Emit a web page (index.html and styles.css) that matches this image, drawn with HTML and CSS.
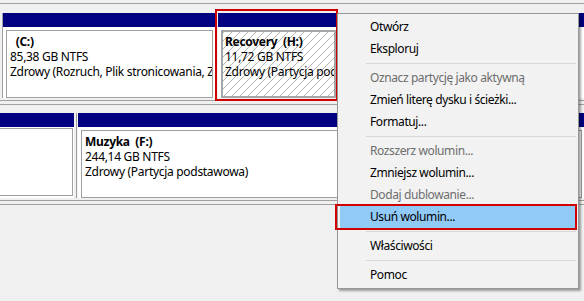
FILE: index.html
```html
<!DOCTYPE html>
<html lang="pl">
<head>
    <meta charset="UTF-8">
    <title>Zarządzanie dyskami</title>
    <link rel="stylesheet" href="styles.css">
</head>
<body>
    <div class="volumes">
        <div class="edge"></div>

        <div class="disk">
            <div class="disk-head"></div>
            <div class="part part-c">
                <div class="part-bar"></div>
                <div class="part-body">
                    <div class="part-box">
                        <div class="part-name">&nbsp;&nbsp;(C:)</div>
                        <div>85,38 GB NTFS</div>
                        <div>Zdrowy (Rozruch, Plik stronicowania, Zrzut awaryjny, Partycja podstawowa)</div>
                    </div>
                </div>
            </div>
            <div class="part-gap"></div>
            <div class="part part-h">
                <div class="part-bar"></div>
                <div class="part-body">
                    <div class="part-box hatched">
                        <div class="part-name">Recovery&nbsp;&nbsp;(H:)</div>
                        <div>11,72 GB NTFS</div>
                        <div>Zdrowy (Partycja podstawowa)</div>
                    </div>
                </div>
            </div>
            <div class="part-gap"></div>
            <div class="part part-rest">
                <div class="part-bar"></div>
                <div class="part-body"></div>
            </div>
        </div>

        <div class="disk-sep"></div>

        <div class="disk">
            <div class="part part-a">
                <div class="part-bar"></div>
                <div class="part-body">
                    <div class="part-box"></div>
                </div>
            </div>
            <div class="part-gap split"></div>
            <div class="part part-f">
                <div class="part-bar"></div>
                <div class="part-body">
                    <div class="part-box">
                        <div class="part-name">Muzyka&nbsp;&nbsp;(F:)</div>
                        <div>244,14 GB NTFS</div>
                        <div>Zdrowy (Partycja podstawowa)</div>
                    </div>
                </div>
            </div>
        </div>

        <div class="disk-sep"></div>
    </div>

    <div class="marker marker-part"></div>

    <ul class="menu">
        <li class="item">Otwórz</li>
        <li class="item">Eksploruj</li>
        <li class="sep"></li>
        <li class="item disabled">Oznacz partycję jako aktywną</li>
        <li class="item">Zmień literę dysku i ścieżki...</li>
        <li class="item">Formatuj...</li>
        <li class="sep"></li>
        <li class="item disabled">Rozszerz wolumin...</li>
        <li class="item">Zmniejsz wolumin...</li>
        <li class="item disabled">Dodaj dublowanie...</li>
        <li class="item active">Usuń wolumin...</li>
        <li class="sep"></li>
        <li class="item">Właściwości</li>
        <li class="sep"></li>
        <li class="item">Pomoc</li>
    </ul>

    <div class="marker marker-item"></div>
</body>
</html>
```

FILE: styles.css
```css
* {
    box-sizing: border-box;
}
body {
    margin: 0;
    background-color: #f0f0f0;
    font-family: "Noto Sans", "Open Sans", sans-serif;
    font-size: 12px;
    letter-spacing: -0.3px;
    color: #000;
    overflow: hidden;
}
.volumes {
    width: 584px;
}
.edge {
    height: 4px;
    border-bottom: 1px solid #a0a0a0;
    margin-bottom: 9px;
}
.disk {
    display: flex;
    height: 85px;
}
.disk-head {
    width: 3px;
    border-right: 1px solid #a0a0a0;
}
.part {
    display: flex;
    flex-direction: column;
    flex-shrink: 0;
}
.part-bar {
    height: 14px;
    background-color: #000080;
}
.part-body {
    flex: 1;
    background-color: #fff;
    padding: 3px 2px 0 3px;
}
.part-box {
    height: 68px;
    border: 1px solid #a0a0a0;
    padding: 3px 3px 0 3px;
    line-height: 15px;
    white-space: nowrap;
    overflow: hidden;
}
.part-name {
    font-weight: bold;
}
.hatched {
    border: 2px solid #a6a6a6;
    padding: 2px 2px 0 2px;
    background-color: #fff;
    background-image: repeating-linear-gradient(135deg, #b4b4b4 0, #b4b4b4 1px, transparent 1px, transparent 5.66px);
}
.part-gap {
    width: 3px;
    flex-shrink: 0;
}
.part-gap.split {
    width: 4px;
    border-left: 2px solid #f0f0f0;
    border-right: 1px solid #f0f0f0;
    background-color: #a0a0a0;
}
.part-c {
    width: 212px;
}
.part-h {
    width: 118px;
}
.part-h .part-body {
    padding-right: 0;
}
.part-rest {
    flex: 1;
}
.part-a {
    width: 74px;
}
.part-a .part-body {
    padding: 1px 1px 0 0;
}
.part-a .part-box {
    border-left: none;
}
.part-f {
    flex: 1;
}
.disk-sep {
    height: 5px;
    border-top: 1px solid #a0a0a0;
    border-bottom: 1px solid #a0a0a0;
    margin: 2px 0 8px;
}

.menu {
    position: absolute;
    left: 337px;
    top: 13px;
    width: 242px;
    margin: 0;
    padding: 2px;
    list-style: none;
    background-color: #f2f2f2;
    border: 1px solid #979797;
    box-shadow: 2px 2px 2px rgba(0, 0, 0, 0.35);
    letter-spacing: -0.4px;
}
.item {
    height: 22px;
    line-height: 22px;
    padding-left: 30px;
    white-space: nowrap;
}
.item.disabled {
    color: #6d6d6d;
}
.item.active {
    background-color: #91c9f7;
}
.sep {
    height: 7px;
    margin-left: 26px;
    padding-top: 3px;
}
.sep::after {
    content: "";
    display: block;
    border-top: 1px solid #d7d7d7;
}

.marker {
    position: absolute;
    border: 2px solid #d00000;
}
.marker-part {
    left: 215px;
    top: 9px;
    width: 123px;
    height: 92px;
}
.marker-item {
    left: 335px;
    top: 204px;
    width: 242px;
    height: 26px;
}
```
